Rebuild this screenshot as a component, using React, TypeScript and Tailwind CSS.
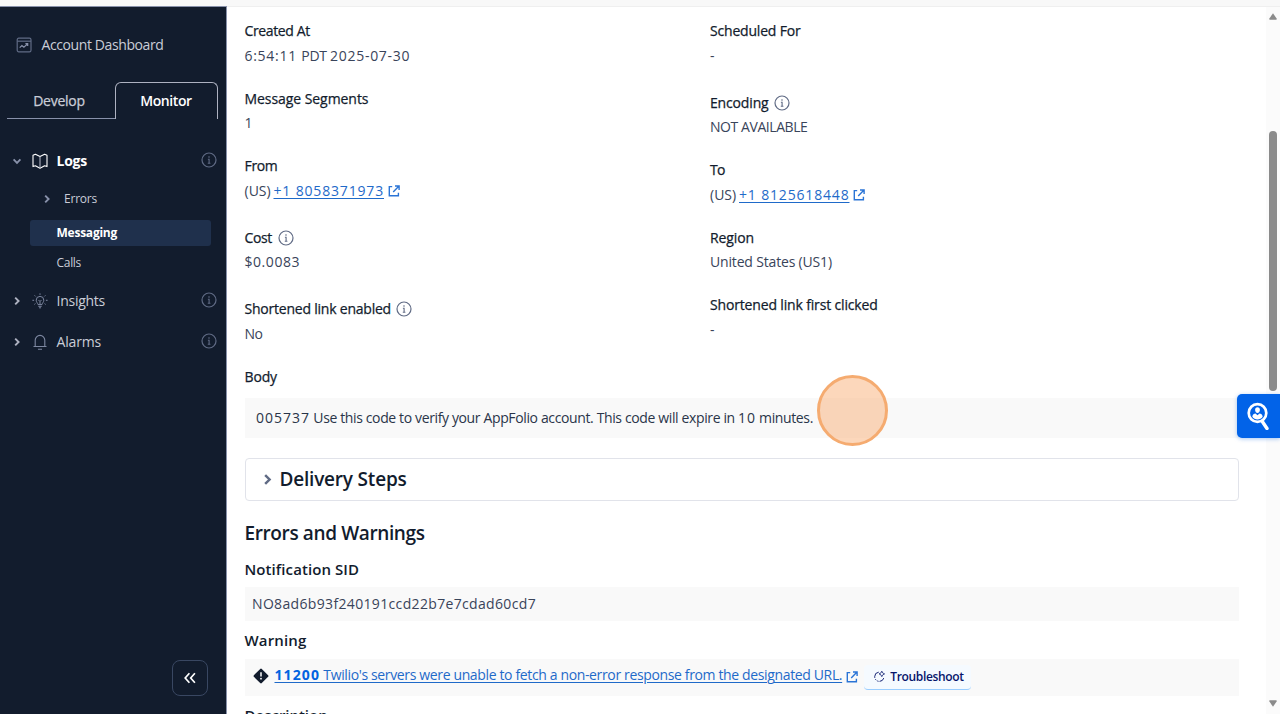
import type { ReactNode } from "react";

function InfoIcon({ className = "" }: { className?: string }) {
  return (
    <svg viewBox="0 0 16 16" className={`h-4 w-4 shrink-0 ${className}`} fill="none" stroke="currentColor">
      <circle cx="8" cy="8" r="7" strokeWidth="1.2" />
      <path d="M6.9 7.2h1.2v3.9M6.8 11.3h2.6" strokeWidth="1.1" />
      <circle cx="8" cy="5" r=".8" fill="currentColor" stroke="none" />
    </svg>
  );
}

function ExternalIcon() {
  return (
    <svg viewBox="0 0 12 12" className="h-3 w-3 shrink-0 text-[#2a74d6]" fill="none" stroke="currentColor" strokeWidth="1.4">
      <path d="M4.2 1.6H1.3v9.1h9.1V7.8" />
      <path d="M7 1h4.1v4.1M11 1.1L5.2 6.9" />
    </svg>
  );
}

function Chevron({ className = "h-2.5 w-2.5", down = false }: { className?: string; down?: boolean }) {
  return (
    <svg viewBox="0 0 10 10" className={`shrink-0 ${className}`} fill="none" stroke="currentColor" strokeWidth="1.9">
      <path d={down ? "M1.6 3.4L5 6.8l3.4-3.4" : "M3.2 1.6L6.6 5 3.2 8.4"} />
    </svg>
  );
}

function Field({ label, info = false, children }: { label: ReactNode; info?: boolean; children: ReactNode }) {
  return (
    <div className={info ? "h-[71.6px] pt-1" : "h-[67.6px]"}>
      <div className="flex h-5 items-center gap-[5.5px] font-medium leading-5 text-[#121c2d] [-webkit-text-stroke:0.25px]">
        {label}
        {info && <InfoIcon className="text-[#606b85]" />}
      </div>
      <div className="mt-[4.5px] flex h-5 items-center leading-5 text-[#39445a]">{children}</div>
    </div>
  );
}

function Phone({ number }: { number: string }) {
  return (
    <>
      <span className="w-[29px]">(US)</span>
      <a className="mr-[3.5px] w-[110.5px] tracking-[0.83px] text-[#1f6ac9] underline underline-offset-2">{number}</a>
      <ExternalIcon />
    </>
  );
}

function Sidebar() {
  return (
    <nav className="flex w-[227px] shrink-0 flex-col border-r border-t border-[#8891aa] bg-[#121c2d] text-sm text-[#cacdd8]">
      <div className="mt-[28px] flex h-5 items-center pl-4">
        <svg viewBox="0 0 16 16" className="h-4 w-4 text-[#606b85]" fill="none" stroke="currentColor" strokeWidth="1.2">
          <rect x="1.2" y="1.2" width="13.8" height="13.6" rx="1.6" />
          <path d="M1.2 4.2h13.8" />
          <path d="M3.7 10.6l2.2-2 2 1.7 3.6-3.4M9.4 6.7h2.3V9" stroke="#8891aa" />
        </svg>
        <span className="ml-[9.5px] tracking-[-0.4px]">Account Dashboard</span>
      </div>
      <div className="mt-[27px] flex h-[37px] pl-[7px] pr-[8px] font-medium">
        <div className="flex w-[108px] items-center justify-center border-b border-[#8891aa] pr-1 pt-px tracking-[-0.27px] [-webkit-text-stroke:0.25px]">
          Develop
        </div>
        <div className="flex flex-1 items-center justify-center rounded-t-md border border-b-0 border-[#aeb2c1] pr-px font-semibold tracking-[-0.41px] text-white">
          Monitor
        </div>
      </div>
      <div className="mt-[32px] flex h-5 items-center pl-3 pr-[9.5px]">
        <Chevron down className="h-2.5 w-2.5 text-[#8891aa]" />
        <svg viewBox="0 0 16 16" className="ml-[9.5px] h-4 w-4 text-white" fill="none" stroke="currentColor" strokeWidth="1.1" strokeLinejoin="round">
          <path d="M8 3.6L3.4 1.2 1 2.2v11.4l2.4-.8L8 15.2l4.6-2.4 2.400.8V2.200l-2.400-1z" />
          <path d="M8 3.6V15" stroke="#aeb2c1" />
        </svg>
        <span className="ml-[9px] flex-1 font-bold tracking-[-0.24px] text-white">Logs</span>
        <InfoIcon className="-translate-y-px text-[#606b85]" />
      </div>
      <div className="mt-[18px] flex h-5 items-center pl-[42px] text-xs">
        <Chevron className="h-2.5 w-2.5 text-[#8891aa]" />
        <span className="ml-3 tracking-[-0.22px]">Errors</span>
      </div>
      <div className="ml-[30px] mt-[11px] flex h-[26px] w-[181px] items-center rounded-[3px] bg-[#1f304c] pl-[26.5px] text-xs font-bold tracking-[-0.24px] text-white">
        Messaging
      </div>
      <div className="mt-[7px] flex h-5 items-center pl-[56.5px] text-xs tracking-[-0.3px]">Calls</div>
      <div className="mt-[18px] flex h-5 items-center pl-3 pr-[9.5px]">
        <Chevron className="h-2.5 w-2.5 text-[#aeb2c1]" />
        <svg viewBox="0 0 16 16" className="ml-[9.5px] h-4 w-4 text-[#7d87a0]" fill="none" stroke="currentColor" strokeWidth="1">
          <path d="M6 11.6C5.8 10 4.2 9.2 4.2 7.2a3.8 3.8 0 0 1 7.6 0c0 2-1.6 2.8-1.8 4.4zM6.3 13.3h3.4M7 14.8h2" />
          <path d="M6.5 7L8 8.5 9.5 7M8 8.500v3M8 .4v1.400M2.600 2.400l1 1M13.400 2.400l-1 1M.4 7.300h1.700M15.600 7.300h-1.700M2.400 11.400l1-.8M13.600 11.400l-1-.8" />
        </svg>
        <span className="ml-[9px] flex-1 tracking-[-0.26px]">Insights</span>
        <InfoIcon className="-translate-y-px text-[#606b85]" />
      </div>
      <div className="mt-[21px] flex h-5 items-center pl-3 pr-[9.5px]">
        <Chevron className="h-2.5 w-2.5 text-[#aeb2c1]" />
        <svg viewBox="0 0 16 16" className="ml-[9.5px] h-4 w-4 text-[#7d87a0]" fill="none" stroke="currentColor" strokeWidth="1.1">
          <path d="M1.5 12.5h13M3.2 12.300V6.200a4.800 4.800 0 0 1 9.600 0v6.100M6 15.200h4" />
        </svg>
        <span className="ml-[9px] flex-1 tracking-[-0.17px]">Alarms</span>
        <InfoIcon className="-translate-y-px text-[#606b85]" />
      </div>
      <button className="mb-[18px] ml-[172px] mt-auto flex h-9 w-9 items-center justify-center rounded-lg border border-[#394762] text-white">
        <svg viewBox="0 0 12 12" className="h-3 w-3" fill="none" stroke="currentColor" strokeWidth="1.7">
          <path d="M5.4 1.3L1.2 6l4.2 4.7M10.900 1.300L6.700 6l4.200 4.700" />
        </svg>
      </button>
    </nav>
  );
}

function Details() {
  return (
    <div className="flex">
      <div className="w-[465.5px]">
        <Field label={<span className="tracking-[-0.36px]">Created At</span>}>
          <span className="whitespace-pre tracking-[0.72px]">
            6:54:11 <span className="tracking-[-0.3px]">PDT </span>2025-07-30
          </span>
        </Field>
        <Field label={<span className="tracking-[-0.06px]">Message Segments</span>}>1</Field>
        <Field label={<span className="tracking-[-0.34px]">From</span>}>
          <Phone number="+1 8058371973" />
        </Field>
        <Field info label={<span className="tracking-[-0.35px]">Cost</span>}>
          <span className="tracking-[0.55px]">$0.0083</span>
        </Field>
        <Field info label={<span className="tracking-[-0.22px]">Shortened link enabled</span>}>
          <span className="tracking-[-0.6px]">No</span>
        </Field>
      </div>
      <div>
        <Field label={<span className="tracking-[-0.19px]">Scheduled For</span>}>-</Field>
        <Field info label={<span className="tracking-[-0.16px]">Encoding</span>}>
          <span className="tracking-[-0.43px]">NOT AVAILABLE</span>
        </Field>
        <Field label={<span className="tracking-[-0.8px]">To</span>}>
          <Phone number="+1 8125618448" />
        </Field>
        <Field label={<span className="tracking-[-0.11px]">Region</span>}>
          <span className="tracking-[-0.17px]">United States (US1)</span>
        </Field>
        <Field label={<span className="tracking-[-0.16px]">Shortened link first clicked</span>}>-</Field>
      </div>
    </div>
  );
}

function Content() {
  return (
    <main className="min-w-0 flex-1 overflow-hidden whitespace-nowrap pl-[17.5px] pr-[27px] pt-[14px] text-sm text-[#121c2d]">
      <Details />
      <div className="h-5 font-medium leading-5 tracking-[-0.14px] [-webkit-text-stroke:0.25px]">Body</div>
      <div className="mt-[11px] flex h-[40px] items-center whitespace-pre bg-[#f9f9f9] pl-[11.5px] tracking-[-0.37px] text-[#2a3549]">
        <span className="tracking-[1px]">005737</span>
        {" Use this code to verify your AppFolio account. This code will expire in "}
        <span className="tracking-[0.85px]">10</span>
        {" minutes."}
      </div>
      <div className="mt-5 flex h-[43px] items-center rounded border border-[#e1e3ea] pl-[15px] text-[19px] font-semibold tracking-[-0.2px]">
        <Chevron className="mr-[6px] h-[13px] w-[13px] text-[#606b85]" />
        Delivery Steps
      </div>
      <h2 className="mt-[19px] h-[26px] text-[19px] font-semibold leading-[26px] tracking-[-0.38px]">Errors and Warnings</h2>
      <h3 className="mt-[13px] h-5 text-[15px] font-semibold leading-5 tracking-[0.08px]">Notification SID</h3>
      <div className="mt-[8px] flex h-[34px] items-center bg-[#f9f9f9] pl-[7.5px] tracking-[0.34px] text-[#39445a]">
        NO8ad6b93f240191ccd22b7e7cdad60cd7
      </div>
      <h3 className="mt-[9px] h-5 text-[15px] font-semibold leading-5 tracking-[0.15px]">Warning</h3>
      <div className="mt-[9px] flex h-[37px] items-center bg-[#f9f9f9] pl-[8.5px]">
        <svg viewBox="0 0 16 16" className="mb-[2px] mr-[5.5px] h-4 w-4 shrink-0">
          <path d="M7.2.9Q8 .1 8.800.9l6.300 6.300q.8.8 0 1.600l-6.300 6.300q-.8.8-1.600 0L.9 8.800q-.8-.8 0-1.600z" fill="#121c2d" />
          <path d="M8 4.3v4.2" stroke="white" strokeWidth="1.5" />
          <circle cx="8" cy="10.7" r=".9" fill="white" />
        </svg>
        <a className="mb-[4px] flex w-[567.5px] whitespace-pre text-[#1f6ac9] underline underline-offset-2">
          <span className="font-bold tracking-[1.1px] text-[#0263e0]">11200</span>
          <span className="tracking-[-0.36px]">{" Twilio's servers were unable to fetch a non-error response from the designated URL."}</span>
        </a>
        <span className="mb-px ml-[3.5px]">
          <ExternalIcon />
        </span>
        <button className="ml-[6.5px] flex h-[25px] w-[107px] items-center justify-center rounded border-b border-[#99cdff] bg-[#f5faff] pl-0.5 text-xs font-semibold tracking-[-0.33px] text-[#06156b]">
          <svg viewBox="0 0 14 14" className="mr-1 h-[13px] w-[13px]" fill="none" stroke="currentColor">
            <path d="M6.2 2.3A5 5 0 1 0 11.6 8.7" strokeWidth="1" strokeDasharray="8.5 1.2 1.5 1.2 1.5 1.2" />
            <path d="M9.5 1.2q.3 2.4 3 3-2.7.6-3 3-.3-2.400-3-3 2.700-.6 3-3z" strokeWidth=".8" />
          </svg>
          Troubleshoot
        </button>
      </div>
      <h3 className="mt-[9px] h-5 text-[15px] font-semibold leading-5">Description</h3>
    </main>
  );
}

export default function App() {
  return (
    <div className="relative flex h-[714px] w-[1280px] flex-col overflow-hidden bg-white font-['Open_Sans','Noto_Sans',sans-serif]">
      <div className="h-1.5 shrink-0 bg-[#f8f8f8]" />
      <div className="flex min-h-0 flex-1">
        <Sidebar />
        <div className="flex min-w-0 flex-1 border-t border-[#efefef]">
          <Content />
          <div className="flex w-[14px] shrink-0 flex-col items-center bg-[#fbfbfb] pt-1.5">
            <svg viewBox="0 0 8 7" className="h-[7px] w-2" fill="#8b8b8b">
              <path d="M4 0.3L7.8 5.7Q8 6.8 7 6.8H1Q0 6.8.2 5.7z" />
            </svg>
            <div className="mt-[111px] h-[260px] w-2 rounded-full bg-[#8b8b8b]" />
            <svg viewBox="0 0 8 7" className="mb-[7px] mt-auto h-[7px] w-2 rotate-180" fill="#8b8b8b">
              <path d="M4 0.3L7.8 5.7Q8 6.8 7 6.8H1Q0 6.8.2 5.7z" />
            </svg>
          </div>
        </div>
      </div>
      <button className="absolute right-0 top-[394px] flex h-[44px] w-[43px] items-center justify-center rounded-l-[5px] bg-[#0263e8] shadow-[0_1px_4px_rgba(2,99,224,0.35)]">
        <svg viewBox="0 0 24 28" className="h-7 w-6 -translate-x-px" fill="none" stroke="white">
          <circle cx="11.5" cy="11" r="8.800" strokeWidth="2.700" />
          <path d="M16.3 19.5l4.700 7" strokeWidth="3.400" strokeLinecap="round" />
          <path d="M11.5 5.300c1.500 0 2.400 1 2.400 2.500S12.900 11 11.500 11s-2.400-1.700-2.400-3.200.9-2.500 2.400-2.500zM6.300 14.700c.3-2.300 1.700-3 3.200-3.200l2 1.700 2-1.700c1.500.2 2.900.9 3.200 3.200-1.300 1.900-3.100 2.700-5.200 2.700s-3.900-.8-5.200-2.700z" fill="white" stroke="none" />
        </svg>
      </button>
      <div className="absolute left-[816.5px] top-[374.5px] h-[71px] w-[71px] rounded-full border-[3px] border-[#f5ab70] bg-[#faaf78]/50" />
    </div>
  );
}
